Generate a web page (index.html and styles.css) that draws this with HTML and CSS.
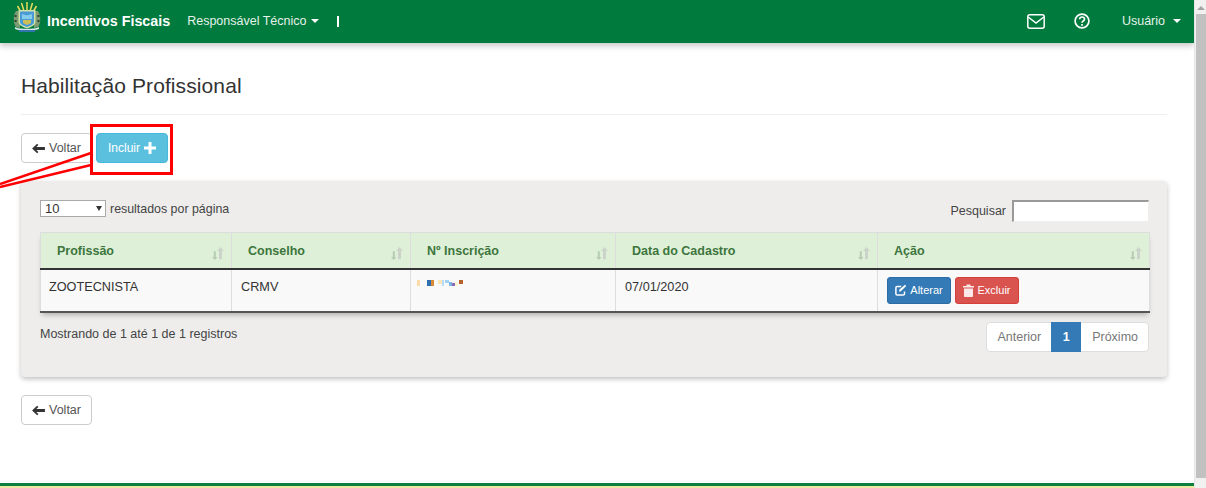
FILE: index.html
```html
<!DOCTYPE html>
<html lang="pt-BR">
<head>
<meta charset="utf-8">
<title>Habilitação Profissional</title>
<link rel="stylesheet" href="styles.css">
</head>
<body>
<div class="viewport">
  <div class="page">
    <nav class="navbar">
      <a class="brand">
        <svg class="logo" width="28" height="30" viewBox="0 0 28 30">
          <g stroke="#e9dc5a" stroke-width="1.500">
            <path d="M14 9V0M11 9 8.500 1M17 9l2.500-8M8 10 4.500 4M20 10l3.500-6"/>
          </g>
          <path d="M3 9C0 13 0 21 3 25l4 1V9z" fill="#7d9a72"/>
          <path d="M25 9c3 4 3 12 0 16l-4 1V9z" fill="#7d9a72"/>
          <path d="M1.500 13h2v2h-2zM1.500 18h2v2h-2zM24.500 13h2v2h-2zM24.500 18h2v2h-2z" fill="#24452f"/>
          <path d="M5.500 8h17v12c0 3-4 5-8.500 6.500C9.500 25 5.500 23 5.500 20z" fill="#cfe3a8"/>
          <path d="M7 9.500h14V20c0 2.500-3.500 3.800-7 5-3.500-1.200-7-2.500-7-5z" fill="#4a9ad8"/>
          <path d="M9 12c3 1.500 7 1.500 10 0v5H9z" fill="#86cdea"/>
          <path d="M10 18h8v3l-4 2-4-2z" fill="#cdbf55"/>
          <path d="M2 25c4 2.500 20 2.500 24 0v2c-6 2-18 2-24 0z" fill="#d9e6ee"/>
          <path d="M6 28h16v2H6z" fill="#2f76ad"/>
        </svg>
        <span class="brand-text">Incentivos Fiscais</span>
      </a>
      <a class="nav-link">Responsável Técnico<span class="caret"></span></a>
      <span class="nav-bar-mark"></span>
      <div class="nav-right">
        <svg class="nav-icon mail" width="18" height="15" viewBox="0 0 18 15" fill="none" stroke="#fff" stroke-width="1.500">
          <rect x=".8" y=".8" width="16.400" height="13.400" rx="2"/>
          <path d="M1.200 3 9 9l7.800-6"/>
        </svg>
        <svg class="nav-icon help" width="16" height="16" viewBox="0 0 16 16" fill="none" stroke="#fff" stroke-width="1.700">
          <circle cx="8" cy="8" r="6.900"/>
          <path d="M5.600 6.300c0-3.100 4.900-3 4.900 0 0 1.800-2.500 1.700-2.500 3.500"/>
          <path d="M8 11v1.700"/>
        </svg>
        <a class="nav-link user">Usuário<span class="caret"></span></a>
      </div>
    </nav>

    <main class="content">
      <h1 class="title">Habilitação Profissional</h1>
      <div class="actions">
        <a class="btn btn-default">
          <svg width="13" height="11" viewBox="0 0 14 12"><path d="M0 6l5.500-5.300 1.400 1.400L4.600 4.400H14v3.200H4.600l2.300 2.300-1.400 1.400z" fill="#333"/></svg>
          Voltar
        </a>
        <a class="btn btn-info">Incluir
          <svg width="12" height="12" viewBox="0 0 12 12"><path d="M4.500 0h3v4.500H12v3H7.500V12h-3V7.500H0v-3h4.500z" fill="#fff"/></svg>
        </a>
      </div>

      <section class="panel">
        <div class="controls">
          <label class="length">
            <span class="fake-select">10<span class="select-arrow"></span></span>
            resultados por página
          </label>
          <label class="search">Pesquisar <span class="search-input"></span></label>
        </div>
        <table class="grid">
          <colgroup>
            <col class="c1"><col class="c2"><col class="c3"><col class="c4"><col class="c5">
          </colgroup>
          <thead>
            <tr>
              <th>Profissão<svg class="sort" width="14" height="13" viewBox="0 0 14 15" preserveAspectRatio="none"><use href="#sort"/></svg></th>
              <th>Conselho<svg class="sort" width="14" height="13" viewBox="0 0 14 15" preserveAspectRatio="none"><use href="#sort"/></svg></th>
              <th>Nº Inscrição<svg class="sort" width="14" height="13" viewBox="0 0 14 15" preserveAspectRatio="none"><use href="#sort"/></svg></th>
              <th>Data do Cadastro<svg class="sort" width="14" height="13" viewBox="0 0 14 15" preserveAspectRatio="none"><use href="#sort"/></svg></th>
              <th>Ação<svg class="sort" width="14" height="13" viewBox="0 0 14 15" preserveAspectRatio="none"><use href="#sort"/></svg></th>
            </tr>
          </thead>
          <tbody>
            <tr>
              <td>ZOOTECNISTA</td>
              <td>CRMV</td>
              <td class="blurred">
                <svg width="50" height="8" viewBox="0 0 50 8">
                  <rect x="0" y="1" width="3" height="6" fill="#fbdba8"/>
                  <rect x="10" y="1" width="4" height="6" fill="#2f6fb0"/>
                  <rect x="14" y="1" width="3" height="6" fill="#d98a35"/>
                  <rect x="21" y="1" width="4" height="4" fill="#fbe6b8"/>
                  <rect x="25" y="1" width="2" height="6" fill="#b5dcf5"/>
                  <rect x="28" y="1" width="4" height="3" fill="#a0d2f2"/>
                  <rect x="32" y="3" width="3" height="4" fill="#7ab5e5"/>
                  <rect x="35" y="4" width="3" height="3" fill="#8a6bb8"/>
                  <rect x="38" y="3" width="3" height="4" fill="#fdf3cf"/>
                  <rect x="42" y="1" width="4" height="4" fill="#b5622b"/>
                </svg>
              </td>
              <td>07/01/2020</td>
              <td class="cell-actions">
                <a class="btn btn-sm btn-primary">
                  <svg width="12" height="12" viewBox="0 0 12 12" fill="none" stroke="#fff" stroke-width="1.500"><path d="M9.500 7.500v2.300c0 .8-.5 1.300-1.300 1.300H2.200c-.8 0-1.300-.5-1.300-1.300V3.800c0-.8.5-1.300 1.300-1.300h4"/><path d="M4.500 5.500 10 .8l1.200 1.300-5.300 5.200-1.900.4z" fill="#fff" stroke="none"/></svg>
                  Alterar
                </a>
                <a class="btn btn-sm btn-danger">
                  <svg width="11" height="13" viewBox="0 0 11 13"><path d="M0 2h3.500V.5h4V2H11v1.500H0zM1 4.500h9V12c0 .6-.4 1-1 1H2c-.6 0-1-.4-1-1z" fill="#fff" opacity=".88"/></svg>
                  Excluir
                </a>
              </td>
            </tr>
          </tbody>
        </table>
        <div class="footer-row">
          <div class="info">Mostrando de 1 até 1 de 1 registros</div>
          <ul class="pagination">
            <li>Anterior</li>
            <li class="active">1</li>
            <li class="next">Próximo</li>
          </ul>
        </div>
      </section>

      <a class="btn btn-default back">
        <svg width="13" height="11" viewBox="0 0 14 12"><path d="M0 6l5.500-5.300 1.400 1.400L4.600 4.400H14v3.200H4.600l2.300 2.300-1.400 1.400z" fill="#333"/></svg>
        Voltar
      </a>
    </main>
    <footer class="bottom"></footer>
  </div>
  <div class="scrollbar">
    <span class="sb-up"></span>
    <span class="sb-thumb"></span>
  </div>
</div>

<svg class="defs" width="0" height="0">
  <defs>
    <g id="sort" fill="#b5cdb1">
      <path d="M2.800 5h2v6.500h1.700L3.800 15 1 11.500h1.800z"/>
      <path d="M8 14V4.500H6.200L9.500 0l3.300 4.500H11V14z" fill="#ccd3ca"/>
    </g>
  </defs>
</svg>

<svg class="annotation" width="176" height="190" viewBox="0 0 176 190" fill="none" stroke="#f00">
  <rect x="91.500" y="125.500" width="80" height="48" stroke-width="3"/>
  <path d="M91 153 0 184M91 165 0 187" stroke-width="2.500"/>
</svg>
</body>
</html>
```

FILE: styles.css
```css
* { box-sizing: border-box; }
html, body { margin: 0; height: 100%; overflow: hidden; }
body {
  font-family: "Liberation Sans", Arial, sans-serif;
  font-size: 13px;
  color: #333;
  background: #fff;
}
.viewport { display: flex; height: 488px; width: 1206px; }
.page { width: 1194px; height: 488px; display: flex; flex-direction: column; }

/* navbar */
.navbar {
  height: 43px;
  flex: none;
  background: #007a3d;
  box-shadow: 0 3px 6px rgba(0, 0, 0, .22);
  display: flex;
  align-items: center;
  color: #fff;
  padding: 0 13px 1px;
}
.brand { display: flex; align-items: center; }
.logo { margin-bottom: 8px; }
.brand-text { font-weight: bold; font-size: 14.300px; margin-left: 6px; }
.nav-link { font-size: 12.500px; color: #e6f2ea; margin-left: 17px; display: flex; align-items: center; }
.caret {
  width: 0; height: 0; margin-left: 5px;
  border-top: 4px solid #fff;
  border-left: 4px solid transparent;
  border-right: 4px solid transparent;
}
.nav-bar-mark { width: 2px; height: 11px; background: #fff; margin-left: 18px; }
.nav-right { margin-left: auto; display: flex; align-items: center; }
.mail { margin-right: 29px; }
.user { margin-left: 32px; margin-right: 0; }
.user .caret { margin-left: 8px; }

/* content */
.content { flex: 1; padding: 0 27px 0 21px; display: flex; flex-direction: column; align-items: stretch; }
.title {
  font-size: 21px; font-weight: 400; line-height: 24px;
  margin: 31px 0 0;
  padding-bottom: 16px;
  border-bottom: 1px solid #eee;
  letter-spacing: .1px;
}
.actions { display: flex; gap: 4px; margin-top: 18px; }
.btn {
  display: inline-flex; align-items: center; justify-content: center;
  height: 30px; border-radius: 4px; border: 1px solid transparent; font-size: 12.500px;
  white-space: nowrap;
}
.btn-default { width: 71px; background: #fff; border-color: #ccc; color: #555; gap: 4px; }
.btn-info { width: 72px; background: #5bc0de; border-color: #46b8da; color: #fff; gap: 4px; font-size: 12px; }
.back { margin-top: 18px; align-self: flex-start; }

/* panel */
.panel {
  margin-top: 18px;
  height: 196px;
  background: #eeedec;
  border-radius: 4px;
  box-shadow: 0 2px 5px rgba(0, 0, 0, .25);
  padding: 19px 18px 0 19px;
  display: flex;
  flex-direction: column;
}
.controls { display: flex; justify-content: space-between; align-items: flex-start; height: 32px; }
.length { display: flex; align-items: center; gap: 4px; font-size: 12.400px; color: #444; }
.fake-select {
  width: 66px; height: 17px; background: #fff; border: 1px solid #aaa;
  font-size: 13px; color: #333; padding-left: 4px; line-height: 15px; position: relative; display: block;
}
.select-arrow {
  position: absolute; right: 3px; top: 5px;
  border-top: 5px solid #333; border-left: 3px solid transparent; border-right: 3px solid transparent;
}
.search { display: flex; align-items: center; font-size: 12.500px; color: #444; gap: 6px; }
.search-input {
  width: 137px; height: 22px; background: #fff;
  border-top: 2px solid #999; border-left: 2px solid #999;
  border-right: 1px solid #eee; border-bottom: 1px solid #eee;
}

/* table */
.grid {
  width: 1109px; table-layout: fixed; border-collapse: collapse;
  box-shadow: 0 4px 5px -2px rgba(0, 0, 0, .25);
  background: #f9f9f9;
  height: 80px;
}
.c1 { width: 191px; } .c2 { width: 179px; } .c3 { width: 205px; } .c4 { width: 262px; } .c5 { width: 272px; }
.grid th {
  position: relative;
  height: 36px; padding: 2px 0 0 16px; text-align: left;
  background: #dff0d8; color: #3c763d; font-size: 12.500px; font-weight: bold;
  border: 1px solid #ddd; border-bottom: 2px solid #333;
}
.sort { position: absolute; right: 6px; top: 14px; }
.grid td {
  height: 43px; padding: 0 0 6px 9px; font-size: 12.700px; color: #333;
  border-left: 1px solid #ddd; border-right: 1px solid #ddd;
  border-bottom: 2px solid #555;
}
.grid td:first-child { padding-left: 8px; }
.grid td.blurred { padding: 0 0 14px 6px; vertical-align: middle; }
.blurred svg { display: block; }
.grid td.cell-actions { padding: 0 0 0 9px; white-space: nowrap; font-size: 0; }
.btn-sm { height: 27px; font-size: 11px; border-radius: 3px; gap: 3px; vertical-align: middle; }
.btn-primary { width: 64px; background: #337ab7; border-color: #2e6da4; color: #fff; }
.btn-danger { width: 64px; margin-left: 4px; background: #d9534f; border-color: #d43f3a; color: #fff; }

/* footer row */
.footer-row { display: flex; justify-content: space-between; align-items: flex-start; margin-top: 9px; width: 1109px; }
.info { font-size: 12.500px; color: #444; margin-top: 5px; }
.pagination { list-style: none; display: flex; margin: 0; padding: 0; background: #fff; height: 30px; border: 1px solid #ddd; border-radius: 4px; font-size: 12.500px; color: #777; }
.pagination li { display: flex; align-items: center; padding: 0 10px; }
.pagination .active { background: #337ab7; color: #fff; font-weight: bold; padding: 0 11.500px; margin: -1px 0; }
.pagination .next { padding: 0 10px 0 11px; }

/* bottom */
.bottom { flex: none; height: 5px; border-top: 3px solid #0a7f3f; background: #eee9a0; }

/* scrollbar */
.scrollbar { width: 12px; height: 488px; flex: none; background: #f1f1f1; border-left: 1px solid #e4e4e4; position: relative; }
.sb-up {
  position: absolute; left: 2px; top: 6px;
  border-bottom: 4px solid #a3a3a3; border-left: 4px solid transparent; border-right: 4px solid transparent;
}
.sb-thumb { position: absolute; left: 1px; right: 0; top: 14px; height: 464px; background: #c1c1c1; }

.defs { position: absolute; }
.annotation { position: absolute; left: 0; top: 0; pointer-events: none; }
```
